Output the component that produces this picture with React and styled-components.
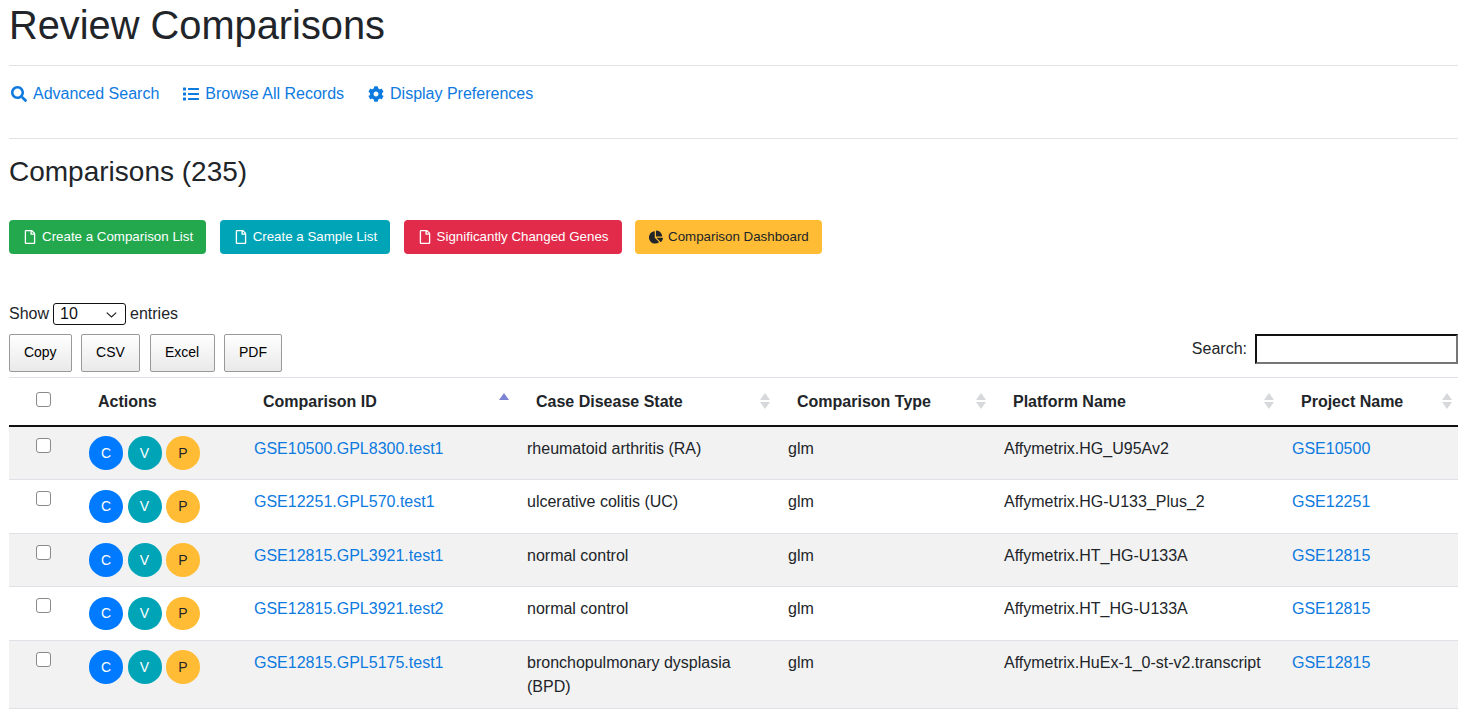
import React from 'react';
import styled, { createGlobalStyle } from 'styled-components';
import { FaSearch, FaList, FaCog, FaRegFile, FaChartPie } from 'react-icons/fa';

const GlobalStyle = createGlobalStyle`
  html, body {
    margin: 0;
    background: #fff;
    color: #212529;
    font-family: "Liberation Sans", Arial, sans-serif;
    font-size: 16px;
    line-height: 24px;
  }
`;

const Page = styled.div`
  padding: 1px 14px 0 9px;
`;

const Title = styled.h1`
  margin: 0 0 16px;
  font-size: 39.8px;
  font-weight: 400;
  line-height: 48px;
`;

const Rule = styled.hr`
  margin: 16px 0;
  border: 0;
  border-top: 1px solid #e3e3e3;
`;

const NavRow = styled.nav`
  display: flex;
  gap: 24px;
  margin-bottom: 32px;
  padding-left: 2px;
`;

const NavLink = styled.a`
  display: inline-flex;
  align-items: center;
  gap: 6px;
  color: #0d7adf;
  text-decoration: none;
  svg {
    font-size: 16px;
  }
`;

const Heading = styled.h3`
  margin: 0 0 31px;
  font-size: 28px;
  font-weight: 400;
  line-height: 33.6px;
`;

const ActionRow = styled.div`
  display: flex;
  gap: 13.5px;
  margin-bottom: 48px;
`;

const ActionButton = styled.a`
  display: inline-flex;
  align-items: center;
  gap: 5px;
  height: 34px;
  padding: 0 13px 0 14px;
  border-radius: 4px;
  background: ${(p) => p.$bg};
  color: ${(p) => p.$fg || '#fff'};
  font-size: 13.33px;
  white-space: nowrap;
`;

const ButtonIcon = styled.span`
  display: inline-flex;
  justify-content: center;
  width: 14px;
  font-size: 14px;
`;

const LengthRow = styled.div`
  display: flex;
  align-items: center;
  gap: 4px;
  height: 24px;
  margin-bottom: 8px;
`;

const SelectWrap = styled.span`
  position: relative;
  display: inline-flex;
  svg {
    position: absolute;
    right: 9px;
    top: 9px;
    pointer-events: none;
  }
`;

const LengthSelect = styled.select`
  appearance: none;
  width: 73px;
  height: 22px;
  padding: 0 0 0 6px;
  border: 1px solid #111;
  border-radius: 3px;
  background: #fff;
  color: #111;
  font-family: inherit;
  font-size: 16px;
`;

const ToolRow = styled.div`
  display: flex;
  justify-content: space-between;
  align-items: flex-start;
  margin-bottom: 5px;
`;

const ExportGroup = styled.div`
  display: flex;
  gap: 9.5px;
`;

const ExportButton = styled.button`
  width: ${(p) => p.$w}px;
  height: 38px;
  padding: 0 0 2px;
  border: 1px solid #999;
  border-radius: 2px;
  background: linear-gradient(to bottom, #fff 0%, #e9e9e9 100%);
  color: #000;
  font-family: inherit;
  font-size: 14px;
`;

const SearchLabel = styled.label`
  display: flex;
  align-items: center;
  gap: 8px;
  height: 30px;
`;

const SearchInput = styled.input`
  box-sizing: border-box;
  width: 203px;
  height: 30px;
  padding: 0 2px;
  border: 2px solid;
  border-color: #111 #767676 #767676 #111;
  background: #fff;
  outline: none;
`;

const Table = styled.table`
  width: 100%;
  table-layout: fixed;
  border-collapse: collapse;
`;

const HeadRow = styled.tr`
  border-top: 1px solid #dee2e6;
  border-bottom: 2px solid #111;
`;

const Th = styled.th`
  position: relative;
  padding: 12px 12px 11px 21px;
  font-weight: 700;
  text-align: left;
  white-space: nowrap;
`;

const CheckHead = styled.th`
  padding: 0;
  vertical-align: top;
  text-align: left;
`;

const SortMark = styled.span`
  position: absolute;
  right: 6px;
  top: 15px;
  width: 10px;
  height: 16px;
  &::before, &::after {
    content: '';
    position: absolute;
    left: 0;
    border-left: 5px solid transparent;
    border-right: 5px solid transparent;
  }
  &::before {
    top: 0;
    border-bottom: 7.5px solid ${(p) => (p.$active ? '#7b84d4' : '#d6d8db')};
  }
  &::after {
    bottom: 0;
    border-top: 7.5px solid ${(p) => (p.$active ? 'transparent' : '#d6d8db')};
  }
`;

const Row = styled.tr`
  border-bottom: 1px solid #dee2e6;
  background: ${(p) => (p.$striped ? '#f2f2f2' : '#fff')};
`;

const Td = styled.td`
  padding: 10.25px 12px 8.75px;
  vertical-align: top;
`;

const ActionCell = styled(Td)`
  padding: 9.5px 12px;
`;

const CheckCell = styled.td`
  padding: 0;
  vertical-align: top;
`;

const Check = styled.input.attrs({ type: 'checkbox' })`
  appearance: none;
  display: block;
  box-sizing: border-box;
  width: 15px;
  height: 15px;
  margin: ${(p) => (p.$head ? '14px 0 0 27px' : '11px 0 0 27px')};
  border: 1px solid #8a8a8a;
  border-radius: 3px;
  background: #fff;
`;

const Circles = styled.div`
  display: flex;
  gap: 4.5px;
`;

const Circle = styled.span`
  display: flex;
  align-items: center;
  justify-content: center;
  width: 34px;
  height: 33.5px;
  border-radius: 50%;
  background: ${(p) => p.$bg};
  color: ${(p) => p.$fg || '#fff'};
  font-size: 14px;
`;

const CellLink = styled.a`
  color: #0d7adf;
  text-decoration: none;
`;

const rows = [
  ['GSE10500.GPL8300.test1', 'rheumatoid arthritis (RA)', 'Affymetrix.HG_U95Av2', 'GSE10500'],
  ['GSE12251.GPL570.test1', 'ulcerative colitis (UC)', 'Affymetrix.HG-U133_Plus_2', 'GSE12251'],
  ['GSE12815.GPL3921.test1', 'normal control', 'Affymetrix.HT_HG-U133A', 'GSE12815'],
  ['GSE12815.GPL3921.test2', 'normal control', 'Affymetrix.HT_HG-U133A', 'GSE12815'],
  ['GSE12815.GPL5175.test1', 'bronchopulmonary dysplasia (BPD)', 'Affymetrix.HuEx-1_0-st-v2.transcript', 'GSE12815'],
];

const actions = [
  { label: 'Create a Comparison List', bg: '#23a84e' },
  { label: 'Create a Sample List', bg: '#00a4b7' },
  { label: 'Significantly Changed Genes', bg: '#e22b4a' },
];

const App = () => {
  return (
    <Page>
      <GlobalStyle />
      <Title>Review Comparisons</Title>
      <Rule />
      <NavRow>
        <NavLink href="#"><FaSearch />Advanced Search</NavLink>
        <NavLink href="#"><FaList />Browse All Records</NavLink>
        <NavLink href="#"><FaCog />Display Preferences</NavLink>
      </NavRow>
      <Rule />
      <Heading>Comparisons (235)</Heading>
      <ActionRow>
        {actions.map((a) => (
          <ActionButton key={a.label} $bg={a.bg}>
            <ButtonIcon><FaRegFile /></ButtonIcon>
            {a.label}
          </ActionButton>
        ))}
        <ActionButton $bg="#ffbc34" $fg="#212529">
          <ButtonIcon><FaChartPie /></ButtonIcon>
          Comparison Dashboard
        </ActionButton>
      </ActionRow>
      <LengthRow>
        Show
        <SelectWrap>
          <LengthSelect defaultValue="10">
            <option>10</option>
            <option>25</option>
            <option>50</option>
            <option>100</option>
          </LengthSelect>
          <svg width="11" height="6" viewBox="0 0 11 6" fill="none" stroke="#222" strokeWidth="1.2">
            <path d="M0.8 0.6 L5.5 5 L10.2 0.6" />
          </svg>
        </SelectWrap>
        entries
      </LengthRow>
      <ToolRow>
        <ExportGroup>
          <ExportButton $w={62.5}>Copy</ExportButton>
          <ExportButton $w={59}>CSV</ExportButton>
          <ExportButton $w={65}>Excel</ExportButton>
          <ExportButton $w={58}>PDF</ExportButton>
        </ExportGroup>
        <SearchLabel>
          Search:
          <SearchInput />
        </SearchLabel>
      </ToolRow>
      <Table>
        <colgroup>
          <col style={{ width: 68 }} />
          <col style={{ width: 165 }} />
          <col style={{ width: 273 }} />
          <col style={{ width: 261 }} />
          <col style={{ width: 216 }} />
          <col style={{ width: 288 }} />
          <col style={{ width: 178 }} />
        </colgroup>
        <thead>
          <HeadRow>
            <CheckHead><Check $head /></CheckHead>
            <Th>Actions</Th>
            <Th>Comparison ID<SortMark $active /></Th>
            <Th>Case Disease State<SortMark /></Th>
            <Th>Comparison Type<SortMark /></Th>
            <Th>Platform Name<SortMark /></Th>
            <Th>Project Name<SortMark /></Th>
          </HeadRow>
        </thead>
        <tbody>
          {rows.map((r, i) => (
            <Row key={r[0]} $striped={i % 2 === 0}>
              <CheckCell><Check /></CheckCell>
              <ActionCell>
                <Circles>
                  <Circle $bg="#007bff">C</Circle>
                  <Circle $bg="#00a4b7">V</Circle>
                  <Circle $bg="#ffbc34" $fg="#212529">P</Circle>
                </Circles>
              </ActionCell>
              <Td><CellLink href="#">{r[0]}</CellLink></Td>
              <Td>{r[1]}</Td>
              <Td>glm</Td>
              <Td>{r[2]}</Td>
              <Td><CellLink href="#">{r[3]}</CellLink></Td>
            </Row>
          ))}
        </tbody>
      </Table>
    </Page>
  );
};

export default App;
